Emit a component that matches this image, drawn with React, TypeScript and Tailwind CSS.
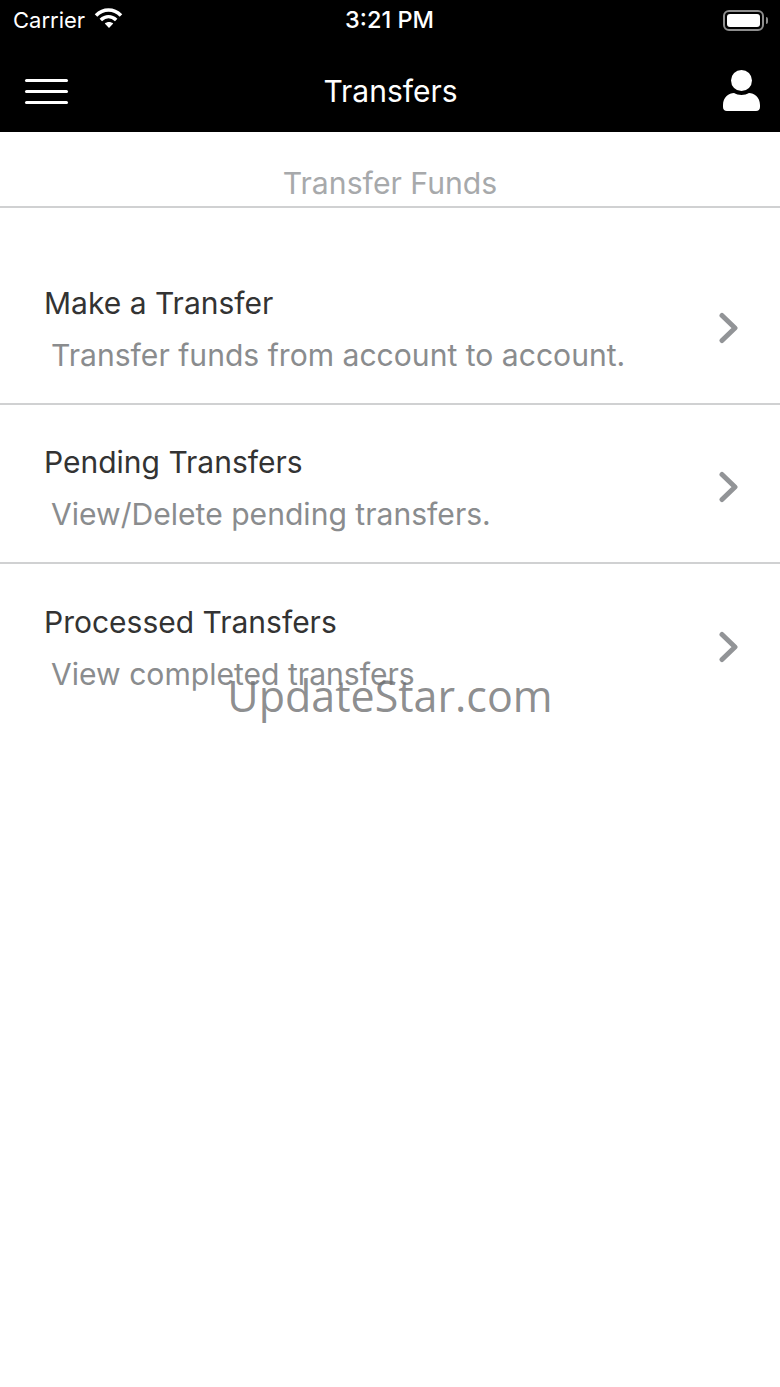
const rows = [
  { title: "Make a Transfer", sub: "Transfer funds from account to account." },
  { title: "Pending Transfers", sub: "View/Delete pending transfers." },
  { title: "Processed Transfers", sub: "View completed transfers" },
];

const TransferRow = ({ title, sub }: { title: string; sub: string }) => {
  return (
    <div className="flex h-[159px] items-center justify-between border-b-2 border-[#d0d1d2] pl-[44px] pr-[40px] pt-[8px] last:border-b-0">
      <div>
        <p className="text-[30px] leading-[36px] text-[#333333]">{title}</p>
        <p className="mt-[16px] pl-[7px] text-[30.1px] leading-[36px] text-[#8a8c8e]">{sub}</p>
      </div>
      <svg width="22" height="32" viewBox="0 0 22 32" fill="none" className="mb-[2px]">
        <path d="M4 3.5 L17 16 L4 28.5" stroke="#929497" strokeWidth="5" strokeLinecap="round" strokeLinejoin="round" />
      </svg>
    </div>
  );
};

export default function App() {
  return (
    <div className="relative h-[1387px] w-[780px] overflow-hidden bg-white font-['Inter',sans-serif]">
      <div className="h-[132px] bg-black text-white">
        {/* status bar */}
        <div className="flex h-[40px] items-center justify-between pl-[13px] pr-[12px]">
          <div className="flex w-[200px] items-center gap-[9px]">
            <span className="text-[22px] leading-none">Carrier</span>
            <svg width="30" height="22" viewBox="0 0 30 22" className="mb-[4px]" fill="none" stroke="white" strokeWidth="3.6">
              <path d="M2 8.5 C9.5 1.2 19.5 1.2 27 8.5" />
              <path d="M6.8 13 C11.6 8.6 17.4 8.6 22.2 13" />
              <path d="M15 21 L10.8 16.6 C13.2 14.6 16.8 14.6 19.2 16.6 Z" fill="white" stroke="none" />
            </svg>
          </div>
          <span className="mr-[2px] text-[23.5px] font-medium leading-none">3:21 PM</span>
          <div className="flex w-[200px] items-center justify-end gap-[2px]">
            <div className="h-[21px] w-[41px] rounded-[6px] border-2 border-[#8e8e8e] p-[2px]">
              <div className="h-full w-full rounded-[3px] bg-white" />
            </div>
            <div className="h-[7px] w-[2px] rounded-r-full bg-[#8e8e8e]" />
          </div>
        </div>
        {/* nav */}
        <div className="flex h-[92px] items-center justify-between pl-[25px] pr-[20px] pt-[10px]">
          <div className="flex w-[100px] justify-start">
            <div className="flex w-[43px] flex-col gap-[8px]">
              <div className="h-[3px] rounded-full bg-white" />
              <div className="h-[3px] rounded-full bg-white" />
              <div className="h-[3px] rounded-full bg-white" />
            </div>
          </div>
          <h1 className="mb-[1px] mr-[4px] text-[30px] leading-none">Transfers</h1>
          <div className="flex w-[100px] justify-end">
            <svg width="37" height="41" viewBox="0 0 37 41" fill="white" className="mb-[2px]">
              <circle cx="18.5" cy="10.5" r="10.5" />
              <path d="M0 35 C0 27 6 23 11 23 C15 25.5 22 25.5 26 23 C31 23 37 27 37 35 V37 C37 39.5 35.5 41 33 41 H4 C1.5 41 0 39.5 0 37 Z" />
            </svg>
          </div>
        </div>
      </div>

      <div className="flex h-[76px] items-end justify-center border-b-2 border-[#d0d1d2] pb-[5px]">
        <h2 className="text-[30.2px] leading-[36px] text-[#a7a9ab]">Transfer Funds</h2>
      </div>

      <div className="pt-[38px]">
        {rows.map((row) => (
          <TransferRow key={row.title} title={row.title} sub={row.sub} />
        ))}
      </div>

      {/* watermark */}
      <div className="absolute left-0 right-0 top-[669px] text-center font-['Open_Sans',sans-serif] text-[43px] leading-[54px] text-[#6f7072]/80">
        UpdateStar.com
      </div>
    </div>
  );
}
